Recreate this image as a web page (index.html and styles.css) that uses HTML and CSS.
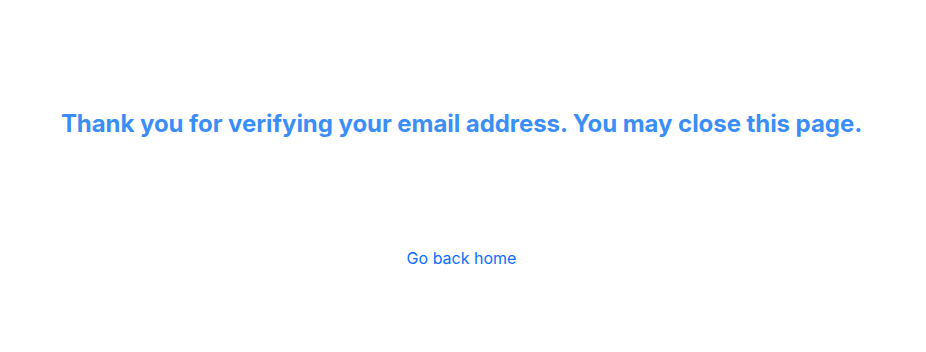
FILE: index.html
```html
<!DOCTYPE html>
<html lang="en">
<head>
<meta charset="utf-8">
<title>Email verified</title>
<link rel="stylesheet" href="styles.css">
</head>
<body>
<main class="page">
  <h1 class="title">Thank you for verifying your email address. You may close this page.</h1>
  <a class="home-link" href="#">Go back home</a>
</main>
</body>
</html>
```

FILE: styles.css
```css
html, body {
  margin: 0;
  padding: 0;
  background: #ffffff;
}
body {
  font-family: Inter, "Noto Sans", sans-serif;
}
.page {
  display: flex;
  flex-direction: column;
  align-items: center;
  padding-top: 108px;
  padding-right: 3px;
}
.title {
  margin: 0;
  font-size: 24px;
  font-weight: 700;
  line-height: 32px;
  letter-spacing: -0.06px;
  color: #3a8ef6;
  text-align: center;
}
.home-link {
  margin-top: 106px;
  font-size: 16px;
  line-height: 24px;
  color: #0d6efd;
  text-decoration: none;
}
```
